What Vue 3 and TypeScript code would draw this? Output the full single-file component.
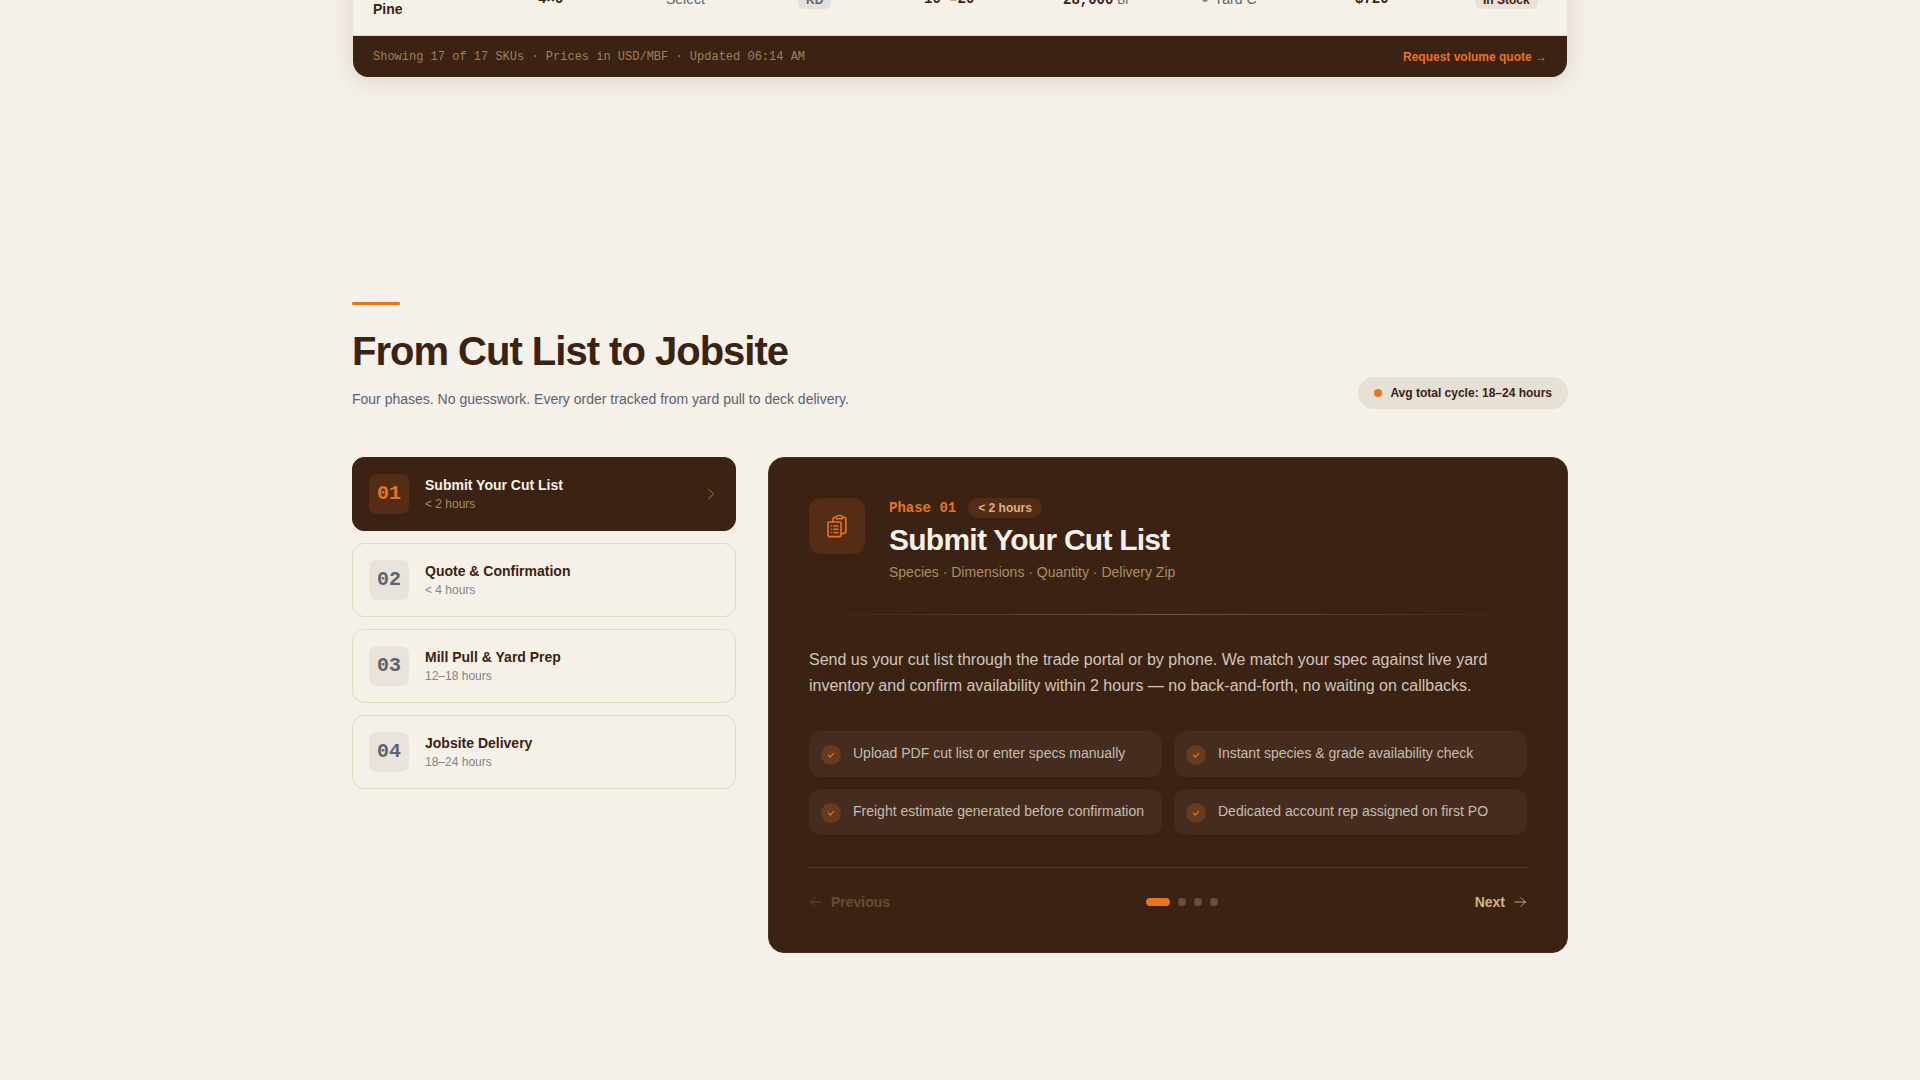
<script setup lang="ts">
import { ref } from 'vue'

interface Phase {
  number: string
  title: string
  duration: string
}

const phases: Phase[] = [
  { number: '01', title: 'Submit Your Cut List', duration: '< 2 hours' },
  { number: '02', title: 'Quote & Confirmation', duration: '< 4 hours' },
  { number: '03', title: 'Mill Pull & Yard Prep', duration: '12–18 hours' },
  { number: '04', title: 'Jobsite Delivery', duration: '18–24 hours' },
]

const features: string[] = [
  'Upload PDF cut list or enter specs manually',
  'Instant species & grade availability check',
  'Freight estimate generated before confirmation',
  'Dedicated account rep assigned on first PO',
]

const columnWidths: number[] = [165, 128, 132, 126, 139, 139, 153, 120, 112]

const active = ref(0)
</script>

<template>
  <main class="page">
    <section class="inventory container">
      <div class="table-card">
        <table class="stock">
          <colgroup>
            <col v-for="(w, i) in columnWidths" :key="i" :style="{ width: w + 'px' }" />
          </colgroup>
          <tbody>
            <tr>
              <td class="species">Southern Yellow Pine</td>
              <td class="mono">4×6</td>
              <td class="muted">Select</td>
              <td><span class="tag tag-grey">KD</span></td>
              <td class="mono">10′–20′</td>
              <td><span class="mono">28,000</span> <span class="unit">BF</span></td>
              <td class="muted"><span class="yard"><i class="yard-dot"></i>Yard C</span></td>
              <td class="mono">$720</td>
              <td><span class="tag tag-stock">In Stock</span></td>
            </tr>
          </tbody>
        </table>
        <footer class="table-footer">
          <span class="table-note">Showing 17 of 17 SKUs · Prices in USD/MBF · Updated 06:14 AM</span>
          <a class="quote-link" href="#quote">Request volume quote →</a>
        </footer>
      </div>
    </section>

    <section class="process container">
      <header class="process-head">
        <div>
          <div class="accent"></div>
          <h2>From Cut List to Jobsite</h2>
          <p class="lead">Four phases. No guesswork. Every order tracked from yard pull to deck delivery.</p>
        </div>
        <div class="cycle"><i class="cycle-dot"></i>Avg total cycle: 18–24 hours</div>
      </header>

      <div class="process-grid">
        <nav class="tabs" aria-label="Order phases">
          <button
            v-for="(phase, i) in phases"
            :key="phase.number"
            type="button"
            class="tab"
            :class="{ active: i === active }"
            @click="active = i"
          >
            <span class="tab-number">{{ phase.number }}</span>
            <span class="tab-text">
              <span class="tab-title">{{ phase.title }}</span>
              <span class="tab-time">{{ phase.duration }}</span>
            </span>
            <svg v-if="i === active" class="icon chevron" viewBox="0 0 24 24" aria-hidden="true">
              <path d="m8.25 4.5 7.5 7.5-7.5 7.5" />
            </svg>
          </button>
        </nav>

        <article class="detail">
          <header class="detail-head">
            <div class="detail-icon">
              <svg class="clipboard" viewBox="0 0 24 24" aria-hidden="true">
                <path d="M9 12h3.75M9 15h3.75M9 18h3.75m3 .75H18a2.25 2.25 0 0 0 2.25-2.25V6.108c0-1.135-.845-2.098-1.976-2.192a48.424 48.424 0 0 0-1.123-.08m-5.801 0c-.065.21-.1.433-.1.664 0 .414.336.75.75.75h4.5a.75.75 0 0 0 .75-.75 2.25 2.25 0 0 0-.1-.664m-5.8 0A2.251 2.251 0 0 1 13.5 2.25H15c1.012 0 1.867.668 2.15 1.586m-5.8 0c-.376.023-.75.05-1.124.08C9.095 4.01 8.25 4.973 8.25 6.108V8.25m0 0H4.875c-.621 0-1.125.504-1.125 1.125v11.25c0 .621.504 1.125 1.125 1.125h9.75c.621 0 1.125-.504 1.125-1.125V9.375c0-.621-.504-1.125-1.125-1.125H8.25ZM6.75 12h.008v.008H6.75V12Zm0 3h.008v.008H6.75V15Zm0 3h.008v.008H6.75V18Z" />
              </svg>
            </div>
            <div>
              <div class="phase-row">
                <span class="phase-label">Phase {{ phases[active].number }}</span>
                <span class="phase-time">{{ phases[active].duration }}</span>
              </div>
              <h3>{{ phases[active].title }}</h3>
              <p class="detail-sub">Species · Dimensions · Quantity · Delivery Zip</p>
            </div>
          </header>
          <div class="divider"></div>
          <p class="detail-body">
            Send us your cut list through the trade portal or by phone. We match your spec against live yard
            inventory and confirm availability within 2 hours — no back-and-forth, no waiting on callbacks.
          </p>
          <ul class="features">
            <li v-for="feature in features" :key="feature">
              <span class="check">
                <svg viewBox="0 0 10 10" aria-hidden="true"><path d="M2.4 5.1 4.3 7l3.4-3.7" /></svg>
              </span>
              {{ feature }}
            </li>
          </ul>
          <footer class="pager">
            <button type="button" class="step" :disabled="active === 0" @click="active--">
              <svg class="icon" viewBox="0 0 24 24" aria-hidden="true">
                <path d="M10.5 19.5 3 12m0 0 7.5-7.5M3 12h18" />
              </svg>
              Previous
            </button>
            <div class="dots">
              <button
                v-for="(phase, i) in phases"
                :key="phase.number"
                type="button"
                class="dot"
                :class="{ on: i === active }"
                :aria-label="phase.title"
                @click="active = i"
              ></button>
            </div>
            <button type="button" class="step" :disabled="active === phases.length - 1" @click="active++">
              Next
              <svg class="icon" viewBox="0 0 24 24" aria-hidden="true">
                <path d="M13.5 4.5 21 12m0 0-7.5 7.5M21 12H3" />
              </svg>
            </button>
          </footer>
        </article>
      </div>
    </section>
  </main>
</template>

<style>
body {
  background: #f5f0e8;
}
</style>

<style scoped>
.page {
  overflow: hidden;
  background: #f5f0e8;
  color: #3b2213;
  font-family: "Liberation Sans", Arial, sans-serif;
  font-size: 14px;
  line-height: 20px;
}

.container {
  box-sizing: border-box;
  max-width: 1280px;
  margin: 0 auto;
  padding: 0 32px;
}

h2,
h3,
p,
ul {
  margin: 0;
  padding: 0;
}

button {
  margin: 0;
  padding: 0;
  border: 0;
  background: none;
  color: inherit;
  font: inherit;
  text-align: left;
  cursor: pointer;
}

.icon {
  width: 16px;
  height: 16px;
  flex: none;
  fill: none;
  stroke: currentColor;
  stroke-width: 1.5;
  stroke-linecap: round;
  stroke-linejoin: round;
}

/* Inventory table */
.table-card {
  margin-top: -38px;
  overflow: hidden;
  border: solid #ebe3d6;
  border-width: 1px 1px 0;
  border-radius: 16px;
  box-shadow: 0 4px 24px rgba(59, 34, 19, 0.12);
}

.stock {
  width: 100%;
  table-layout: fixed;
  border-collapse: separate;
  border-spacing: 0;
}

.stock td {
  padding: 16px 20px;
  border-bottom: 1px solid #e2d8c4;
}

.species {
  font-weight: 700;
}

.mono {
  font-family: "Liberation Mono", "Courier New", monospace;
  font-weight: 700;
}

.muted,
.unit {
  color: #5c6370;
}

.unit {
  font-size: 12px;
}

.tag {
  padding: 2px 8px;
  border-radius: 6px;
  font-size: 12px;
  font-weight: 700;
}

.tag-grey {
  background: #e3dfd9;
  color: #5c6370;
}

.tag-stock {
  background: #e9e1d6;
}

.yard {
  display: flex;
  align-items: center;
  gap: 6px;
}

.yard-dot {
  width: 6px;
  height: 6px;
  border-radius: 50%;
  background: #8a8680;
}

.table-footer {
  display: flex;
  align-items: center;
  justify-content: space-between;
  padding: 13px 20px 12px;
  background: #3b2213;
  font-size: 12px;
  line-height: 16px;
}

.table-note {
  color: #a08058;
  font-family: "Liberation Mono", "Courier New", monospace;
}

.quote-link {
  color: #e8751a;
  font-weight: 700;
  text-decoration: none;
}

/* Process section */
.process {
  padding-top: 225px;
  padding-bottom: 127px;
}

.process-head {
  display: flex;
  align-items: flex-end;
  justify-content: space-between;
  margin-bottom: 48px;
}

.accent {
  width: 48px;
  height: 3px;
  margin-bottom: 24px;
  border-radius: 2px;
  background: #e8751a;
}

h2 {
  margin-bottom: 16px;
  font-size: 40px;
  line-height: 44px;
  letter-spacing: -1px;
}

.lead {
  color: #5c6370;
}

.cycle {
  display: flex;
  align-items: center;
  gap: 8px;
  padding: 8px 16px;
  border-radius: 16px;
  background: #e6e0d5;
  font-size: 12px;
  line-height: 16px;
  font-weight: 700;
}

.cycle-dot {
  width: 8px;
  height: 8px;
  border-radius: 50%;
  background: #e8751a;
}

.process-grid {
  display: grid;
  grid-template-columns: 12fr 25fr;
  gap: 32px;
  align-items: start;
}

.tabs {
  display: flex;
  flex-direction: column;
  gap: 12px;
}

.tab {
  display: flex;
  align-items: center;
  gap: 16px;
  padding: 16px;
  border: 1px solid #e3dac2;
  border-radius: 12px;
}

.tab-number {
  width: 40px;
  flex: none;
  border-radius: 8px;
  background: #e9e3dc;
  color: #5c6370;
  font-family: "Liberation Mono", "Courier New", monospace;
  font-size: 20px;
  line-height: 40px;
  font-weight: 700;
  text-align: center;
}

.tab-text {
  display: flex;
  flex: 1;
  flex-direction: column;
  gap: 1px;
  padding-bottom: 2px;
}

.tab-title {
  font-weight: 700;
}

.tab-time {
  color: #81858b;
  font-size: 12px;
  line-height: 16px;
}

.tab.active {
  border-color: #3b2213;
  background: #3b2213;
  color: #f5f0e8;
}

.active .tab-number {
  background: #552c15;
  color: #e8751a;
}

.active .tab-time {
  color: #a98a61;
}

.chevron {
  color: #d06a20;
}

/* Phase detail */
.detail {
  padding: 40px;
  border: 1px solid #4a3021;
  border-radius: 16px;
  background: #3b2213;
}

.detail-head {
  display: flex;
  align-items: flex-start;
  gap: 24px;
}

.detail-icon {
  display: flex;
  width: 56px;
  height: 56px;
  flex: none;
  align-items: center;
  justify-content: center;
  border-radius: 12px;
  background: #552c15;
}

.clipboard {
  width: 26px;
  height: 26px;
  fill: none;
  stroke: #e8751a;
  stroke-width: 1.5;
  stroke-linecap: round;
  stroke-linejoin: round;
}

.phase-row {
  display: flex;
  align-items: center;
  gap: 12px;
}

.phase-label {
  color: #e8751a;
  font-family: "Liberation Mono", "Courier New", monospace;
  font-weight: 700;
}

.phase-time {
  padding: 2px 10px;
  border-radius: 10px;
  background: #552c15;
  color: #d4b483;
  font-size: 12px;
  line-height: 16px;
  font-weight: 700;
}

h3 {
  margin: 4px 0;
  color: #f5f0e8;
  font-size: 30px;
  line-height: 36px;
  letter-spacing: -0.025em;
}

.detail-sub {
  color: #a98d67;
}

.divider {
  height: 1px;
  margin: 32px 0;
  background: linear-gradient(90deg, transparent, #73583f, transparent);
}

.detail-body {
  color: #d0c6bc;
  font-size: 16px;
  line-height: 26px;
}

.features {
  display: grid;
  grid-template-columns: 1fr 1fr;
  gap: 12px;
  margin: 32px 0;
  list-style: none;
}

.features li {
  display: flex;
  align-items: flex-start;
  gap: 12px;
  padding: 12px;
  border-radius: 12px;
  background: #452c1f;
  color: #c7bcb1;
}

.check {
  display: flex;
  width: 20px;
  height: 20px;
  flex: none;
  align-items: center;
  justify-content: center;
  margin-top: 2px;
  border-radius: 50%;
  background: #663b1f;
}

.check svg {
  width: 10px;
  height: 10px;
  fill: none;
  stroke: #e8751a;
  stroke-width: 1.2;
  stroke-linecap: round;
  stroke-linejoin: round;
}

.pager {
  display: flex;
  align-items: center;
  justify-content: space-between;
  padding-top: 24px;
  border-top: 1px solid #523628;
}

.step {
  display: flex;
  align-items: center;
  gap: 8px;
  color: #d4b483;
  font-weight: 700;
}

.step:disabled {
  color: #694b33;
  cursor: default;
}

.step .icon {
  width: 14px;
  height: 14px;
}

.dots {
  display: flex;
  gap: 8px;
}

.dot {
  width: 8px;
  height: 8px;
  border-radius: 4px;
  background: #6b4f3a;
}

.dot.on {
  width: 24px;
  background: #e8751a;
}
</style>
